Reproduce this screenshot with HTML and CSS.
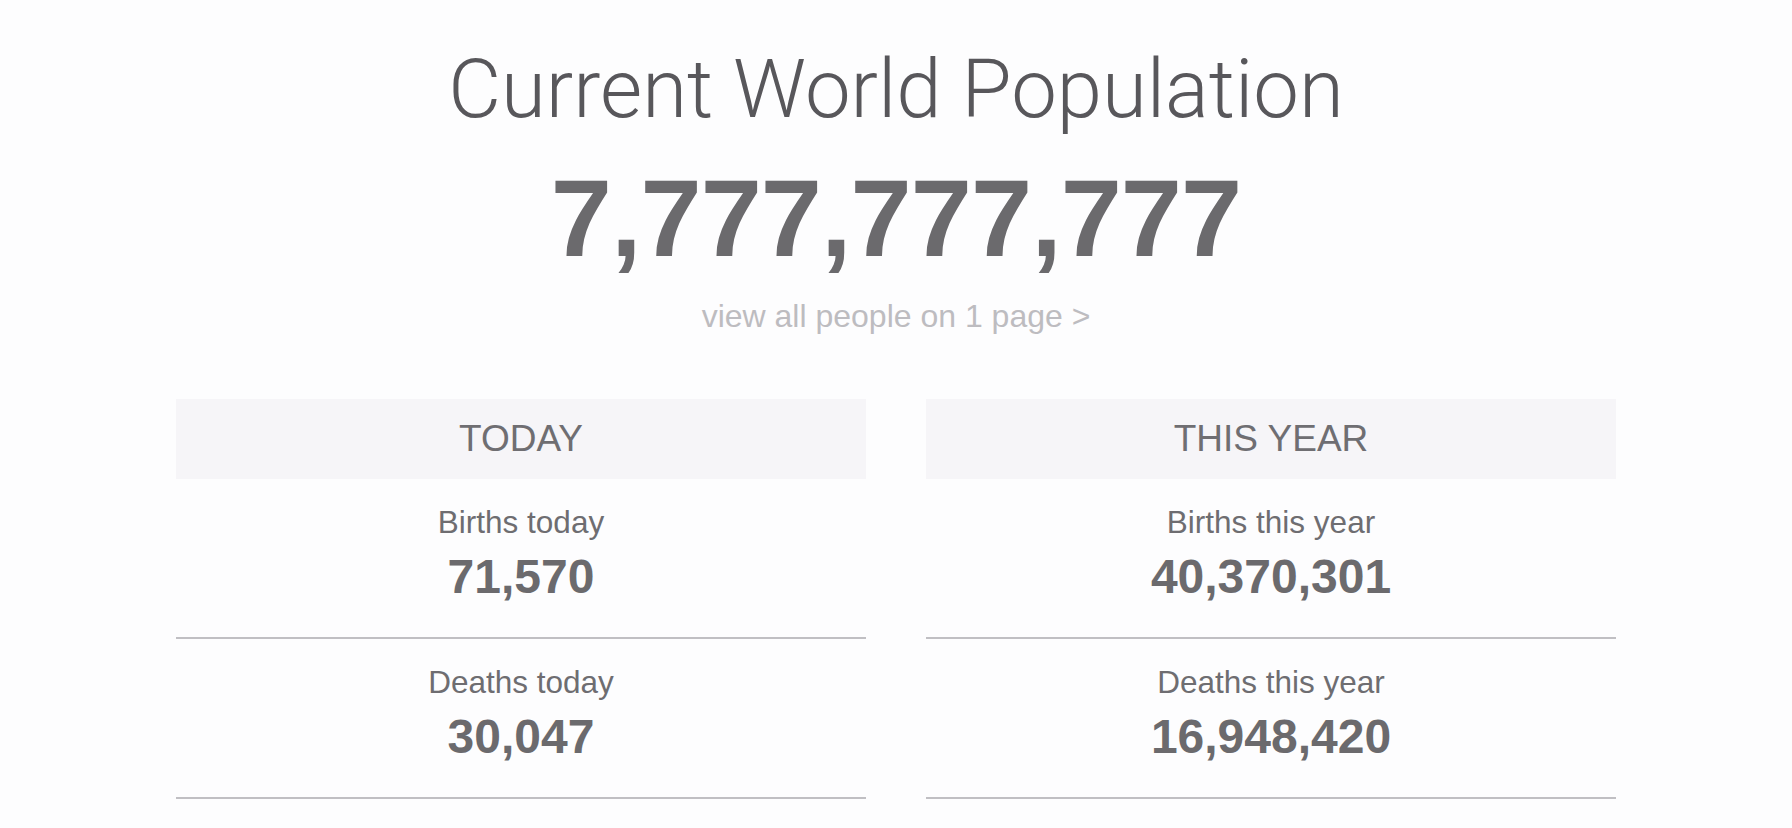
FILE: index.html
```html
<!DOCTYPE html>
<html lang="en">
<head>
<meta charset="utf-8">
<title>Current World Population</title>
<link rel="stylesheet" href="styles.css">
</head>
<body>
<main class="page">
  <header class="hero">
    <h1 class="hero-title">Current World Population</h1>
    <div class="hero-count">7,777,777,777</div>
    <a class="hero-link" href="#">view all people on 1 page &gt;</a>
  </header>
  <section class="panels">
    <div class="panel">
      <div class="panel-head">TODAY</div>
      <div class="stat">
        <div class="stat-label">Births today</div>
        <div class="stat-value">71,570</div>
      </div>
      <div class="stat">
        <div class="stat-label">Deaths today</div>
        <div class="stat-value">30,047</div>
      </div>
    </div>
    <div class="panel">
      <div class="panel-head">THIS YEAR</div>
      <div class="stat">
        <div class="stat-label">Births this year</div>
        <div class="stat-value">40,370,301</div>
      </div>
      <div class="stat">
        <div class="stat-label">Deaths this year</div>
        <div class="stat-value">16,948,420</div>
      </div>
    </div>
  </section>
</main>
</body>
</html>
```

FILE: styles.css
```css
html, body {
  margin: 0;
  padding: 0;
  background: #fdfdfe;
}
body {
  font-family: "Liberation Sans", Arial, sans-serif;
  color: #6d6c70;
}
.page {
  width: 1440px;
  margin: 0 auto;
}
.hero {
  display: flex;
  flex-direction: column;
  align-items: center;
  padding-top: 49px;
}
.hero-title {
  margin: 0;
  font-family: "Roboto", "Liberation Sans", sans-serif;
  font-weight: 300;
  font-size: 81.5px;
  line-height: 80px;
  color: #58575b;
}
.hero-count {
  margin-top: 34px;
  font-weight: bold;
  font-size: 110px;
  line-height: 110px;
  color: #6b6a6d;
  letter-spacing: -1px;
}
.hero-link {
  margin-top: 27px;
  font-size: 32px;
  line-height: 32px;
  color: #bdbcc0;
  text-decoration: none;
}
.panels {
  display: grid;
  grid-template-columns: 1fr 1fr;
  gap: 60px;
  margin-top: 67px;
}
.panel-head {
  height: 80px;
  display: flex;
  align-items: center;
  justify-content: center;
  background: #f6f5f8;
  font-size: 37px;
  color: #6f6e72;
}
.stat {
  height: 158px;
  border-bottom: 2px solid #c0bfc3;
  text-align: center;
}
.stat-label {
  padding-top: 27px;
  font-size: 31.5px;
  line-height: 32px;
  color: #6e6d71;
}
.stat-value {
  margin-top: 15px;
  font-weight: bold;
  font-size: 48px;
  line-height: 48px;
  color: #6b6a6d;
}
```
